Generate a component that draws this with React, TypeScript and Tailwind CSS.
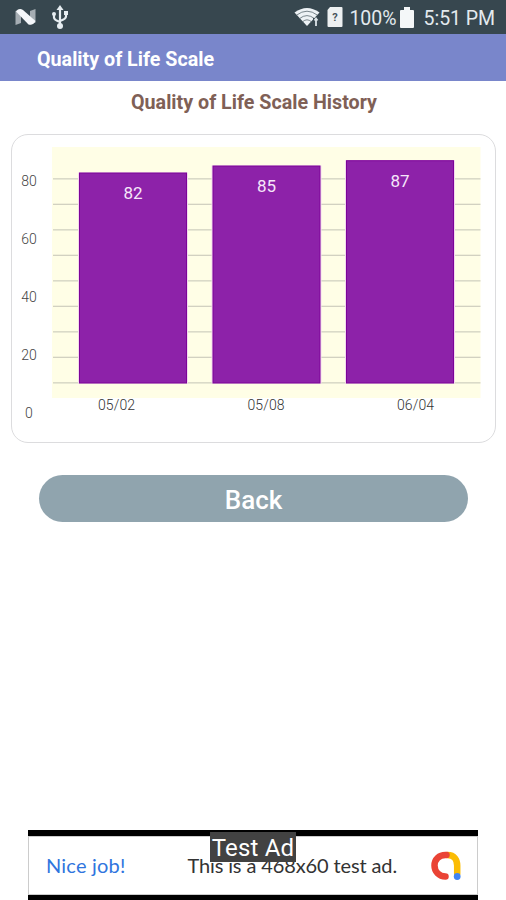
type Entry = { date: string; score: number; x: number; top: number; dateX: number };

const entries: Entry[] = [
  { date: '05/02', score: 82, x: 79, top: 172.5, dateX: 116.5 },
  { date: '05/08', score: 85, x: 212.5, top: 165.5, dateX: 266 },
  { date: '06/04', score: 87, x: 346, top: 160.2, dateX: 415.5 },
];

const ticks = [
  { label: '80', y: 185.5 },
  { label: '60', y: 243.5 },
  { label: '40', y: 301.5 },
  { label: '20', y: 359.5 },
  { label: '0', y: 417.5 },
];

const BAR_WIDTH = 108;
const BASELINE = 383.5;

/* ── Status bar icons ── */
const NougatIcon = () => (
  <svg width="22" height="18" viewBox="0 0 22 18" aria-hidden="true">
    <path d="M.5 3 6 1v14l-5.500 2zM15 3l5.500-2v13.500L15 16.500z" fill="#a5adb3" />
    <path d="M1 3.500Q4-.5 8 2L20.500 13q-2 4.500-7 3.500z" fill="#f4f7fa" />
  </svg>
);

const UsbIcon = () => (
  <svg width="18" height="25" viewBox="0 0 18 25" fill="none" stroke="#e6edf1" strokeWidth="2.200" aria-hidden="true">
    <path d="M9 4v17M3 9v3.500q0 2.500 6 4.500M15 8v3.500q0 2.500-6 4.500" />
    <path d="M9 0l3.500 5h-7z" fill="#e6edf1" stroke="none" />
    <circle cx="3" cy="9" r="2" fill="#e6edf1" stroke="none" />
    <path d="M13 6h4v4h-4z" fill="#e6edf1" stroke="none" />
    <circle cx="9" cy="21" r="3" fill="#e6edf1" stroke="none" />
  </svg>
);

const WifiIcon = () => (
  <svg width="26" height="20" viewBox="0 0 26 20" aria-hidden="true">
    <path d="M.5 5.500Q13-3.500 25.500 5.500L13 19z" fill="#edf2f5" />
    <path d="M2.500 8.200q10.500-8 21 0M5.500 11.600q7.500-6 15 0M8.500 14.800q4.500-4 9 0" fill="none" stroke="#5b6970" strokeWidth=".8" />
    <path d="M19 11h7v9h-7z" fill="#37474f" />
    <path d="M22 11.500V19M20.500 13.500l1.500-2 1.500 2" fill="none" stroke="#dce4e8" strokeWidth="1.800" />
  </svg>
);

const SimIcon = () => (
  <svg width="16" height="20" viewBox="0 0 16 20" aria-hidden="true">
    <path d="M3 0h11.500q1 0 1 1v18q0 1-1 1H1.500q-1 0-1-1V3z" fill="#edf0f1" />
    <text x="8" y="14" textAnchor="middle" fontSize="11" fontWeight="700" fill="#47545b" fontFamily="Roboto, sans-serif">?</text>
  </svg>
);

const BatteryIcon = () => (
  <svg width="14" height="21" viewBox="0 0 14 21" aria-hidden="true">
    <path d="M4 0h6v3h3q1 0 1 1v16q0 1-1 1H1q-1 0-1-1V4q0-1 1-1h3z" fill="#f4f7f8" />
  </svg>
);

const AdMobLogo = () => (
  <svg width="32" height="30" viewBox="0 0 32 30" fill="none" strokeWidth="6.500" strokeLinecap="round" aria-hidden="true">
    <path d="M17.500 4c7 0 9.700 5 9.700 10.500v8" stroke="#fbbc04" />
    <path d="M16.500 4C9 3.500 4.500 8.500 4.500 14.500S9 25.500 15.500 25.500" stroke="#ea4335" />
    <circle cx="27.200" cy="25.500" r="3.400" fill="#4285f4" />
  </svg>
);

const HistoryChart = () => (
  <svg
    className="block shrink-0"
    width="484"
    height="309"
    viewBox="12 134 484 309"
    fontFamily="Roboto, sans-serif"
    role="img"
    aria-label="Quality of Life Scale History"
  >
    <rect x="52" y="147" width="428.500" height="251" fill="#fffee6" />
    {Array.from({ length: 9 }, (_, i) => (
      <rect key={i} x="53" y={178.2 + i * 25.5} width="427.500" height="1.300" fill="#d2d1c1" />
    ))}
    {ticks.map(({ label, y }) => (
      <text key={label} x="29" y={y} textAnchor="middle" fontSize="14" fontWeight="300" fill="#444">{label}</text>
    ))}
    {entries.map(({ date, score, x, top, dateX }) => (
      <g key={date}>
        <rect x={x - 1} y={top} width={BAR_WIDTH + 2} height={BASELINE - top} fill="#f3d9ee" />
        <rect x={x + 0.5} y={top + 0.5} width={BAR_WIDTH - 1} height={BASELINE - top - 1} fill="#8d22a9" stroke="#7d0398" />
        <text x={x + BAR_WIDTH / 2} y={top + 26.5} textAnchor="middle" fontSize="17" fill="#f6e6fa">{score}</text>
        <text x={dateX} y="410" textAnchor="middle" fontSize="14" fontWeight="300" textLength="37" fill="#333">{date}</text>
      </g>
    ))}
  </svg>
);

export default function App() {
  return (
    <div className="flex h-[900px] w-[506px] flex-col overflow-hidden bg-white font-['Roboto',sans-serif]">
      {/* ── Status bar ── */}
      <div className="flex h-[34px] shrink-0 items-center bg-[#37474f] pr-[11px] pl-[15px] text-[19.500px] text-[#e3eaee]">
        <NougatIcon />
        <span className="ml-[14px]"><UsbIcon /></span>
        <div className="ml-auto flex items-center">
          <WifiIcon />
          <span className="ml-[7px]"><SimIcon /></span>
          <span className="ml-[6px] pt-[3px]">100%</span>
          <span className="ml-[3px]"><BatteryIcon /></span>
          <span className="ml-[10px] pt-[3px] tracking-[-0.05px]">5:51 PM</span>
        </div>
      </div>

      {/* ── App bar ── */}
      <header className="flex h-[47px] shrink-0 items-center bg-[#7986cb] pt-[4px] pl-[37px]">
        <h1 className="text-[19.700px] font-bold text-white">Quality of Life Scale</h1>
      </header>

      <h2 className="mt-[8px] h-[28px] shrink-0 pl-[2px] text-center text-[19.700px] leading-[28px] font-bold text-[#7f6056]">
        Quality of Life Scale History
      </h2>

      <section className="mr-[10px] ml-[11px] mt-[17px] flex h-[309px] shrink-0 items-center justify-center rounded-[17px] border-[1.500px] border-[#dcdcde]">
        <HistoryChart />
      </section>

      <button className="mt-[32px] mr-[38px] ml-[39px] h-[47px] shrink-0 rounded-full bg-[#90a4ae] pt-[4px] text-[26px] leading-[43px] font-medium text-white">
        Back
      </button>

      {/* ── Banner ad ── */}
      <aside className="relative mt-auto mr-[28px] ml-[28px] h-[70px] shrink-0 border-t-[6px] border-b-[5px] border-black">
        <div className="flex h-[59px] items-center border border-[#ccc] pr-[15px] pl-[17px] font-['Lato',sans-serif] text-[20px]">
          <span className="pb-[2px] tracking-[0.2px] text-[#2f75de]">Nice job!</span>
          <span className="ml-auto pb-[2px] tracking-[-0.12px] text-[#333]">This is a 468x60 test ad.</span>
          <span className="ml-[33px]"><AdMobLogo /></span>
        </div>
        <span className="absolute -top-[4px] left-[182px] flex h-[30px] w-[86px] items-center justify-center bg-[#424242] pt-[2px] text-[24px] tracking-[0.2px] whitespace-nowrap text-white">
          Test Ad
        </span>
      </aside>
    </div>
  );
}
